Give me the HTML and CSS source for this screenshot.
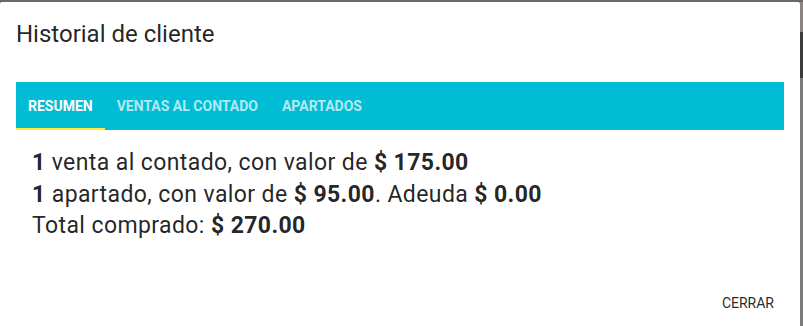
FILE: index.html
```html
<!DOCTYPE html>
<html lang="es">
<head>
    <meta charset="UTF-8">
    <title>Historial de cliente</title>
    <link rel="stylesheet" href="styles.css">
</head>
<body>
    <div class="backdrop">
        <div class="dialog">
            <h2 class="dialog-title">Historial de cliente</h2>

            <div class="tab-bar">
                <div class="tab active">Resumen</div>
                <div class="tab">Ventas al contado</div>
                <div class="tab">Apartados</div>
            </div>

            <div class="summary">
                <p><b>1</b> venta al contado, con valor de <b>$ 175.00</b></p>
                <p><b>1</b> apartado, con valor de <b>$ 95.00</b>. Adeuda <b>$ 0.00</b></p>
                <p>Total comprado: <b>$ 270.00</b></p>
            </div>

            <div class="dialog-actions">
                <button class="btn-flat">Cerrar</button>
            </div>
        </div>
        <div class="page-edge"></div>
    </div>
</body>
</html>
```

FILE: styles.css
```css
body {
    margin: 0;
    font-family: Roboto, "Liberation Sans", sans-serif;
    background-color: #6d6661;
    color: rgba(0, 0, 0, 0.87);
    overflow: hidden;
}
.backdrop {
    display: flex;
    height: 326px;
    padding-top: 2px;
    box-sizing: border-box;
}
.dialog {
    width: 800px;
    flex-shrink: 0;
    background-color: #fff;
    border-radius: 2px 2px 0 0;
    display: flex;
    flex-direction: column;
}
.page-edge {
    flex: 1;
    background: linear-gradient(#8a8582 0, #8a8582 30px, #3b3b3b 30px, #3b3b3b 76px, #7b7b7b 76px);
}
.dialog-title {
    margin: 0;
    padding: 16px 16px 0;
    font-size: 24px;
    font-weight: 400;
    line-height: 32px;
    height: 80px;
    box-sizing: border-box;
    flex-shrink: 0;
}
.tab-bar {
    display: flex;
    margin: 0 16px;
    height: 48px;
    flex-shrink: 0;
    background-color: #00bcd4;
}
.tab {
    padding: 0 12px;
    line-height: 48px;
    font-size: 14px;
    font-weight: 700;
    text-transform: uppercase;
    color: rgba(255, 255, 255, 0.7);
    box-sizing: border-box;
}
.tab.active {
    color: #fff;
    border-bottom: 2px solid #ffeb3b;
}
.summary {
    padding: 17px 32px 0;
    font-size: 23px;
    letter-spacing: 0.4px;
    line-height: 31.5px;
    flex: 1;
}
.summary p {
    margin: 0;
}
.dialog-actions {
    display: flex;
    justify-content: flex-end;
    padding: 0 16px 4px;
}
.btn-flat {
    background: none;
    border: none;
    font-family: inherit;
    font-size: 14px;
    text-transform: uppercase;
    color: rgba(0, 0, 0, 0.87);
    padding: 0 10px;
    height: 38px;
    margin-bottom: 0;
}
```
